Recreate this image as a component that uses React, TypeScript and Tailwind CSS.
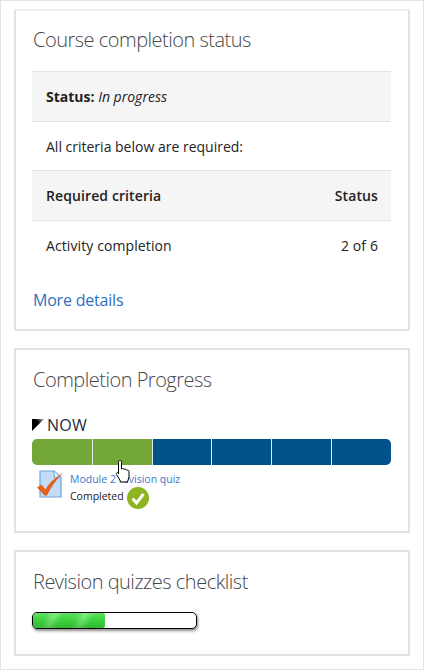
export default function App() {
  const font = { fontFamily: '"Open Sans", "Noto Sans", sans-serif' };
  const title = "h-[33px] ml-[1px] text-[20px] leading-[33px] font-light text-[#45484a] tracking-[-0.5px]";
  return (
    <div className="w-[424px] h-[670px] bg-white border border-[#e3e3e3] pt-[8px] pl-[13px] pr-[13px] flex flex-col text-[#1f1f1f] overflow-hidden" style={font}>
      <section className="h-[322px] shrink-0 border-2 border-[#e3e3e3] border-t-[#f0f0f0] pl-[16px] pr-[17px] pt-[12px]">
        <h2 className={title}>Course completion status</h2>
        <div className="mt-[15px] text-[14px] text-[#222]">
          <div className="h-[51px] bg-[#f5f5f5] border-y border-[#e3e3e3] pl-[14px] pr-[13px] flex items-center"><b className="font-bold">Status:</b>&nbsp;<i>In progress</i></div>
          <div className="h-[48px] pl-[14px] pr-[13px] flex items-center">All criteria below are required:</div>
          <div className="h-[51px] bg-[#f5f5f5] border-y border-[#e3e3e3] pl-[14px] pr-[13px] flex items-center justify-between font-semibold tracking-[0.1px]"><span>Required criteria</span><span>Status</span></div>
          <div className="h-[50px] pb-[2px] pl-[14px] pr-[13px] flex items-center justify-between tracking-[0.1px]"><span>Activity completion</span><span>2 of 6</span></div>
        </div>
        <a className="block ml-[1px] mt-[17px] text-[16px] leading-[24px] tracking-[-0.2px] text-[#2f6fbf]">More details</a>
      </section>
      <section className="relative h-[185px] shrink-0 mt-[17px] border-2 border-[#e3e3e3] pl-[16px] pr-[17px] pt-[13px]">
        <h2 className={title}>Completion Progress</h2>
        <div className="mt-[18px] flex items-center gap-[3px] h-[22px] text-[16px] text-[#1f2a44] tracking-[0.2px]">
          <svg width="12" height="12" viewBox="0 0 12 12"><defs><linearGradient id="nowg" x1="0" y1="1" x2="1" y2="0"><stop offset="0" stopColor="#000" /><stop offset="0.6" stopColor="#000" /><stop offset="1" stopColor="#bbb" /></linearGradient></defs><polygon points="0,0 12,0 0,12" fill="url(#nowg)" /></svg>
          <span>NOW</span>
        </div>
        <div className="mt-[3px] h-[26px] rounded-[5px] overflow-hidden grid grid-cols-[61px_60px_59px_60px_60px_59px] w-[359px]">
          {["#73a839", "#73a839", "#02538a", "#02538a", "#02538a", "#02538a"].map((c, i) => (
            <div key={i} className={i < 5 ? "h-full border-r border-[#e8e8e8]" : "h-full"} style={{ backgroundColor: c }} />
          ))}
        </div>
        <div className="mt-[5px] flex items-start">
          <svg width="28" height="28" viewBox="0 0 28 28" className="ml-[5px] shrink-0">
            <path d="M3 1h14l7 6v20H3z" fill="#c3dcf7" stroke="#6ea3e0" strokeWidth="1.200" />
            <path d="M16.500 1l1 7h6.500" fill="#eaf3fc" stroke="#6ea3e0" strokeWidth="1" />
            <path d="M0 17.500l4.500-3 4 5C12 13 18 7.500 26 3 19.500 9.500 14 17 10 25.500H7.500z" fill="#e0651f" />
          </svg>
          <div className="ml-[5px] pt-[1px] text-[10.500px] leading-[17px] text-[#222]">
            <div className="text-[#3a78c9]">Module 2 revision quiz</div>
            <div className="flex items-center h-[17px]">Completed
              <svg width="22" height="22" viewBox="0 0 22 22" className="ml-[3px] mt-[3px]"><circle cx="11" cy="11" r="11" fill="#8db51f" /><path d="M5.500 11.500l4 4.500 7-9" fill="none" stroke="#fff" strokeWidth="3" /></svg>
            </div>
          </div>
        </div>
        <svg className="absolute left-[99px] top-[109px]" width="18" height="24" viewBox="0 0 18 24">
          <path d="M5 1.500c1 0 1.500.7 1.500 1.500v7l1-.5c1 0 1.300.3 1.500 1 1-.7 2.300-.4 2.500.7 1-.5 2.500 0 2.500 1.300V18l-1.500 5H6L1.500 15.500c-.7-1.500.8-2.500 2-1.500L3.500 15V3c0-.8.500-1.500 1.500-1.500z" fill="#fff" stroke="#000" strokeWidth="1" />
        </svg>
      </section>
      <section className="h-[106px] shrink-0 mt-[17px] border-2 border-[#e3e3e3] pl-[16px] pr-[17px] pt-[13px]">
        <h2 className={title}>Revision quizzes checklist</h2>
        <div className="mt-[14px] w-[165px] h-[17px] rounded-[5px] border border-black bg-white overflow-hidden shadow-[1px_2px_3px_rgba(0,0,0,0.45)]">
          <div className="h-full w-[72px] rounded-r-[2px] blur-[0.5px] bg-[linear-gradient(to_bottom,rgba(255,255,255,0.2),rgba(0,0,0,0)_40%,rgba(0,90,0,0.25)),repeating-linear-gradient(115deg,#3fd63f_0px,#3fd63f_12px,#70e670_20px,#3fd63f_28px)]" />
        </div>
      </section>
    </div>
  );
}
